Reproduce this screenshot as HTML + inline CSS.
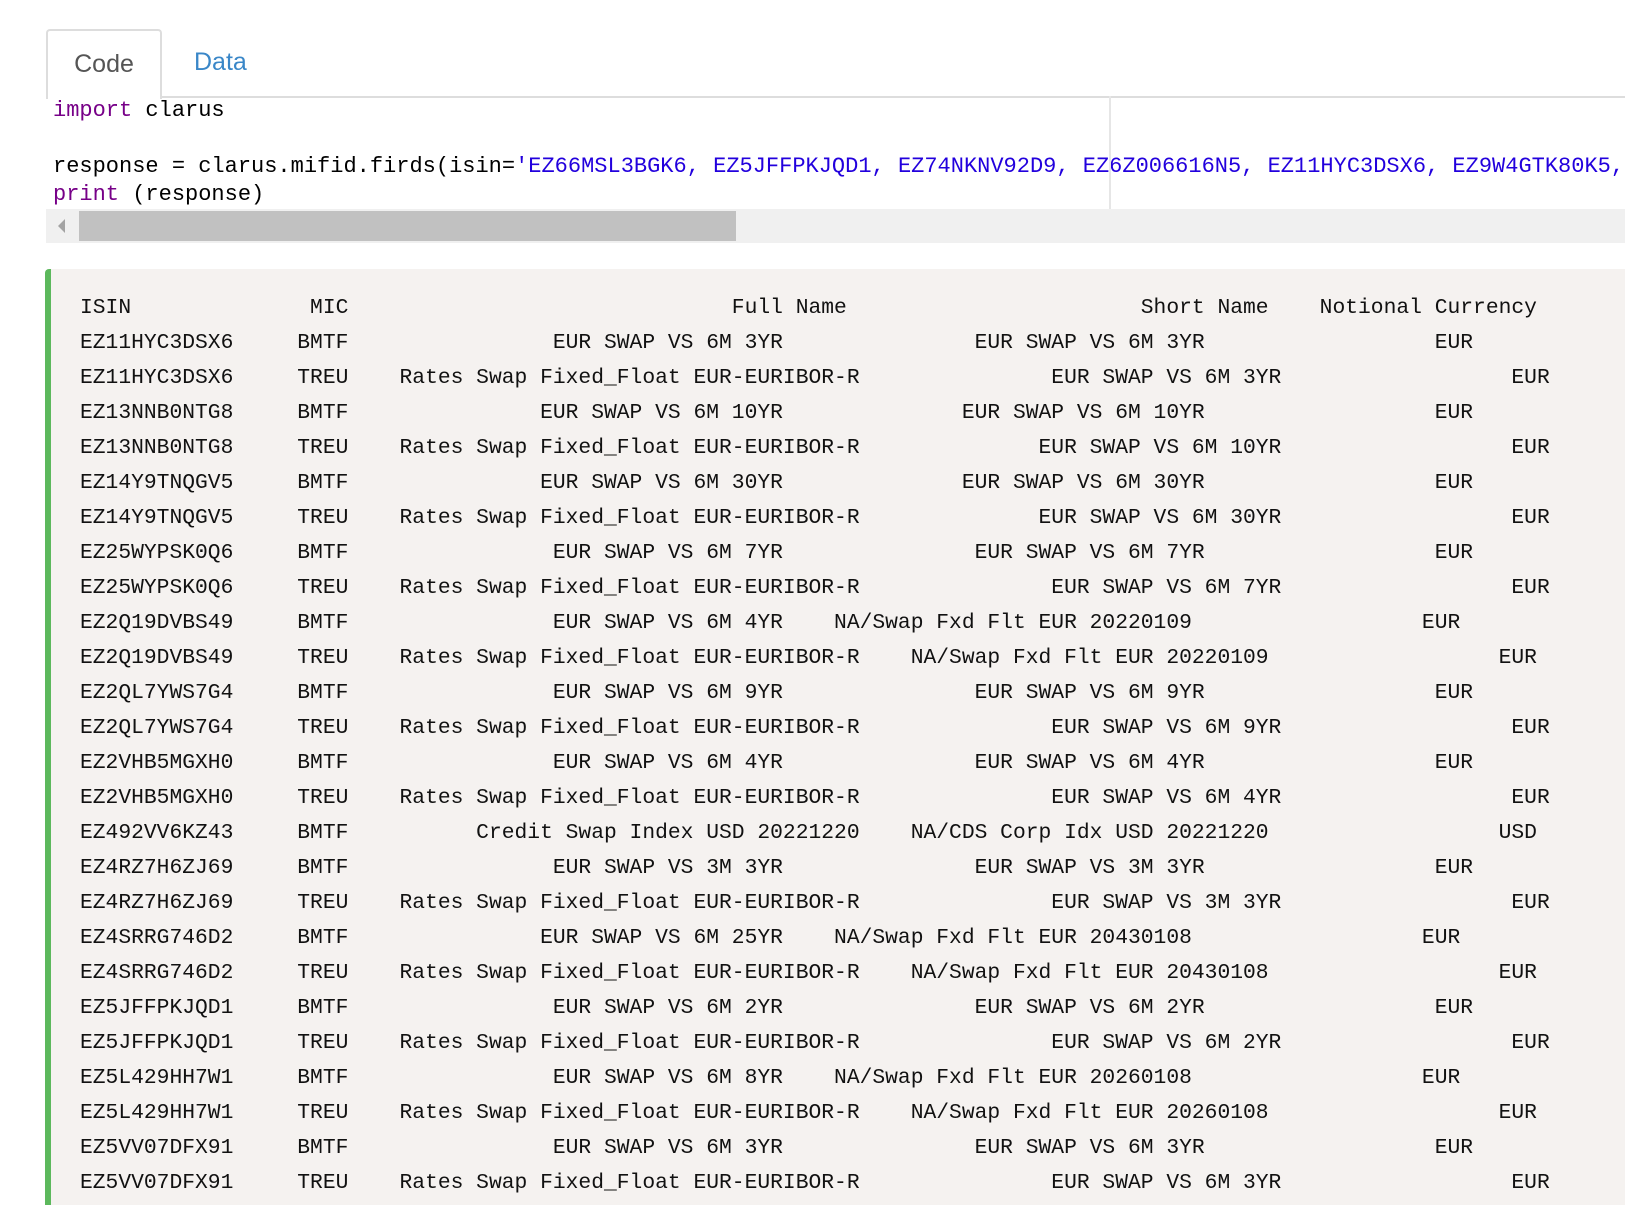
<!DOCTYPE html>
<html><head><meta charset="utf-8"><style>
html,body{margin:0;padding:0;background:#fff;width:1625px;height:1205px;overflow:hidden;}
.tabbar{position:absolute;left:46px;top:0;right:0;height:96px;border-bottom:2px solid #ddd;}
.tab{position:absolute;top:29px;height:67px;font-family:"Liberation Sans",sans-serif;font-size:25px;line-height:67px;}
.tab.code{left:46px;width:112px;border:2px solid #ddd;border-bottom:none;border-radius:4px 4px 0 0;background:#fff;color:#555;text-align:center;height:68px;}
.tab.data{left:194px;color:#3a87c8;}
.codebox{position:absolute;left:46px;top:96px;right:0;height:113px;overflow:hidden;}
.codebox pre{margin:0;position:absolute;left:7px;top:1px;font-family:"Liberation Mono",monospace;font-size:22px;line-height:28px;color:#000;white-space:pre;}
.kw{color:#708;} .str{color:#20d;}
.vline{position:absolute;left:1109px;top:96px;width:2px;height:113px;background:#e6e6e6;}
.scroll{position:absolute;left:46px;top:209px;right:0;height:34px;background:#f0f0f0;}
.thumb{position:absolute;left:33px;top:2px;width:657px;height:30px;background:#c1c1c1;}
.arrow{position:absolute;left:12px;top:10px;width:0;height:0;border-top:7px solid transparent;border-bottom:7px solid transparent;border-right:7px solid #a3a3a3;}
.out{position:absolute;left:45px;top:269px;right:0;bottom:0;background:#f5f2f0;border-left:6px solid #5cb85c;border-radius:4px 0 0 0;}
.out pre{margin:0;position:absolute;left:29px;top:22px;font-family:"Liberation Mono",monospace;font-size:21.3px;line-height:35px;color:#111;white-space:pre;}
</style></head><body>
<div class="tabbar"></div>
<div class="tab code">Code</div>
<div class="tab data">Data</div>
<div class="codebox"><pre><span class="kw">import</span> clarus

response = clarus.mifid.firds(isin=<span class="str">'EZ66MSL3BGK6, EZ5JFFPKJQD1, EZ74NKNV92D9, EZ6Z006616N5, EZ11HYC3DSX6, EZ9W4GTK80K5, EZ2Q19DVBS49</span>
<span class="kw">print</span> (response)</pre></div>
<div class="vline"></div>
<div class="scroll"><div class="arrow"></div><div class="thumb"></div></div>
<div class="out"><pre>ISIN              MIC                              Full Name                       Short Name    Notional Currency
EZ11HYC3DSX6     BMTF                EUR SWAP VS 6M 3YR               EUR SWAP VS 6M 3YR                  EUR
EZ11HYC3DSX6     TREU    Rates Swap Fixed_Float EUR-EURIBOR-R               EUR SWAP VS 6M 3YR                  EUR
EZ13NNB0NTG8     BMTF               EUR SWAP VS 6M 10YR              EUR SWAP VS 6M 10YR                  EUR
EZ13NNB0NTG8     TREU    Rates Swap Fixed_Float EUR-EURIBOR-R              EUR SWAP VS 6M 10YR                  EUR
EZ14Y9TNQGV5     BMTF               EUR SWAP VS 6M 30YR              EUR SWAP VS 6M 30YR                  EUR
EZ14Y9TNQGV5     TREU    Rates Swap Fixed_Float EUR-EURIBOR-R              EUR SWAP VS 6M 30YR                  EUR
EZ25WYPSK0Q6     BMTF                EUR SWAP VS 6M 7YR               EUR SWAP VS 6M 7YR                  EUR
EZ25WYPSK0Q6     TREU    Rates Swap Fixed_Float EUR-EURIBOR-R               EUR SWAP VS 6M 7YR                  EUR
EZ2Q19DVBS49     BMTF                EUR SWAP VS 6M 4YR    NA/Swap Fxd Flt EUR 20220109                  EUR
EZ2Q19DVBS49     TREU    Rates Swap Fixed_Float EUR-EURIBOR-R    NA/Swap Fxd Flt EUR 20220109                  EUR
EZ2QL7YWS7G4     BMTF                EUR SWAP VS 6M 9YR               EUR SWAP VS 6M 9YR                  EUR
EZ2QL7YWS7G4     TREU    Rates Swap Fixed_Float EUR-EURIBOR-R               EUR SWAP VS 6M 9YR                  EUR
EZ2VHB5MGXH0     BMTF                EUR SWAP VS 6M 4YR               EUR SWAP VS 6M 4YR                  EUR
EZ2VHB5MGXH0     TREU    Rates Swap Fixed_Float EUR-EURIBOR-R               EUR SWAP VS 6M 4YR                  EUR
EZ492VV6KZ43     BMTF          Credit Swap Index USD 20221220    NA/CDS Corp Idx USD 20221220                  USD
EZ4RZ7H6ZJ69     BMTF                EUR SWAP VS 3M 3YR               EUR SWAP VS 3M 3YR                  EUR
EZ4RZ7H6ZJ69     TREU    Rates Swap Fixed_Float EUR-EURIBOR-R               EUR SWAP VS 3M 3YR                  EUR
EZ4SRRG746D2     BMTF               EUR SWAP VS 6M 25YR    NA/Swap Fxd Flt EUR 20430108                  EUR
EZ4SRRG746D2     TREU    Rates Swap Fixed_Float EUR-EURIBOR-R    NA/Swap Fxd Flt EUR 20430108                  EUR
EZ5JFFPKJQD1     BMTF                EUR SWAP VS 6M 2YR               EUR SWAP VS 6M 2YR                  EUR
EZ5JFFPKJQD1     TREU    Rates Swap Fixed_Float EUR-EURIBOR-R               EUR SWAP VS 6M 2YR                  EUR
EZ5L429HH7W1     BMTF                EUR SWAP VS 6M 8YR    NA/Swap Fxd Flt EUR 20260108                  EUR
EZ5L429HH7W1     TREU    Rates Swap Fixed_Float EUR-EURIBOR-R    NA/Swap Fxd Flt EUR 20260108                  EUR
EZ5VV07DFX91     BMTF                EUR SWAP VS 6M 3YR               EUR SWAP VS 6M 3YR                  EUR
EZ5VV07DFX91     TREU    Rates Swap Fixed_Float EUR-EURIBOR-R               EUR SWAP VS 6M 3YR                  EUR</pre></div>
</body></html>
